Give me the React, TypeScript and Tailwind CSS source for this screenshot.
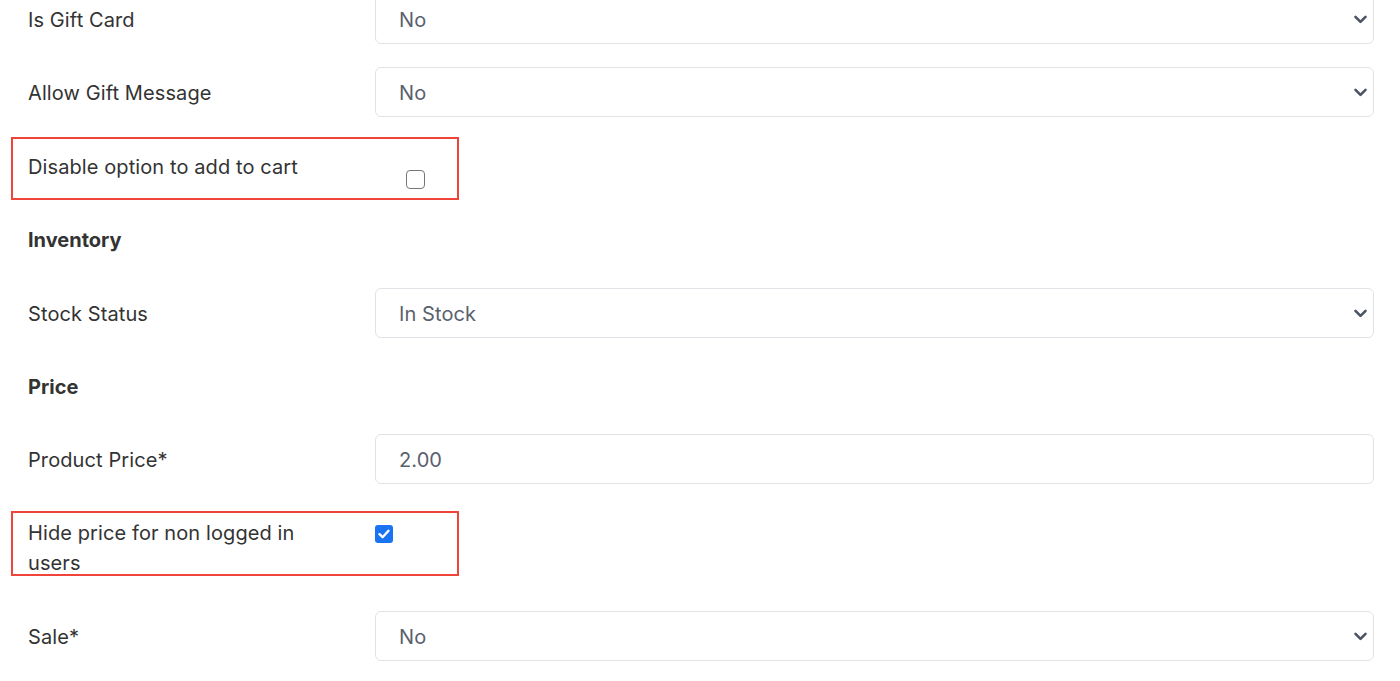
import React from 'react';

const Chevron: React.FC = () => (
  <svg width="13" height="9" viewBox="0 0 13 9" className="shrink-0">
    <path d="M1.5 1.8 L6.5 6.8 L11.5 1.8" fill="none" stroke="#4b5563" strokeWidth="2.6" strokeLinecap="round" strokeLinejoin="round" />
  </svg>
);

const SelectBox: React.FC<{ value: string; chevron?: boolean }> = ({ value, chevron = true }) => (
  <div className="flex h-[50px] w-[999px] items-center justify-between rounded-[6px] border border-[#dfe3e8] bg-white pl-[23px] pr-[6px]">
    <span className="pt-[2px] text-[20px] tracking-[0.1px] text-[#59616d]">{value}</span>
    {chevron && <Chevron />}
  </div>
);

const FieldRow: React.FC<{ label: string; value: string; chevron?: boolean; className?: string }> = ({
  label,
  value,
  chevron,
  className = '',
}) => (
  <div className={`flex items-center ${className}`}>
    <div className="w-[347px] pt-[2px] text-[20px] tracking-[0.1px] text-[#333]">{label}</div>
    <SelectBox value={value} chevron={chevron} />
  </div>
);

const Check: React.FC<{ checked?: boolean }> = ({ checked }) =>
  checked ? (
    <span className="flex h-[18px] w-[18px] items-center justify-center rounded-[3px] bg-[#1a73f0]">
      <svg width="12" height="10" viewBox="0 0 12 10">
        <path d="M1.5 5.2 L4.6 8.2 L10.5 1.8" fill="none" stroke="white" strokeWidth="2.4" strokeLinecap="round" strokeLinejoin="round" />
      </svg>
    </span>
  ) : (
    <span className="block h-[19px] w-[19px] rounded-[4px] border-[1.5px] border-[#767676] bg-white" />
  );

export default function App() {
  return (
    <div
      className="h-[681px] w-[1400px] overflow-hidden bg-white pl-[28px]"
      style={{ fontFamily: 'Inter, "Noto Sans", sans-serif' }}
    >
      <FieldRow label="Is Gift Card" value="No" className="-mt-[6px]" />
      <FieldRow label="Allow Gift Message" value="No" className="mt-[23px]" />

      <div className="-ml-[17px] mt-[20px] flex h-[63px] w-[448px] border-2 border-[#f0443a] pl-[15px] pt-[13px]">
        <div className="w-[378px] text-[20px] leading-[30px] tracking-[0.1px] text-[#333]">Disable option to add to cart</div>
        <div className="pt-[18px]">
          <Check />
        </div>
      </div>

      <div className="flex h-[80px] items-center text-[20px] font-bold text-[#333]">Inventory</div>
      <FieldRow label="Stock Status" value="In Stock" className="mt-[8px]" />

      <div className="flex h-[96px] items-center pt-[1px] text-[20px] font-bold text-[#333]">Price</div>
      <FieldRow label="Product Price*" value="2.00" chevron={false} />

      <div className="-ml-[17px] mt-[27px] flex h-[65px] w-[448px] border-2 border-[#f0443a] pl-[15px] pt-[5px]">
        <div className="w-[347px] pr-[27px] text-[20px] leading-[30px] tracking-[0.1px] text-[#333]">Hide price for non logged in users</div>
        <div className="pt-[7px]">
          <Check checked />
        </div>
      </div>

      <FieldRow label="Sale*" value="No" className="mt-[35px]" />
    </div>
  );
}
